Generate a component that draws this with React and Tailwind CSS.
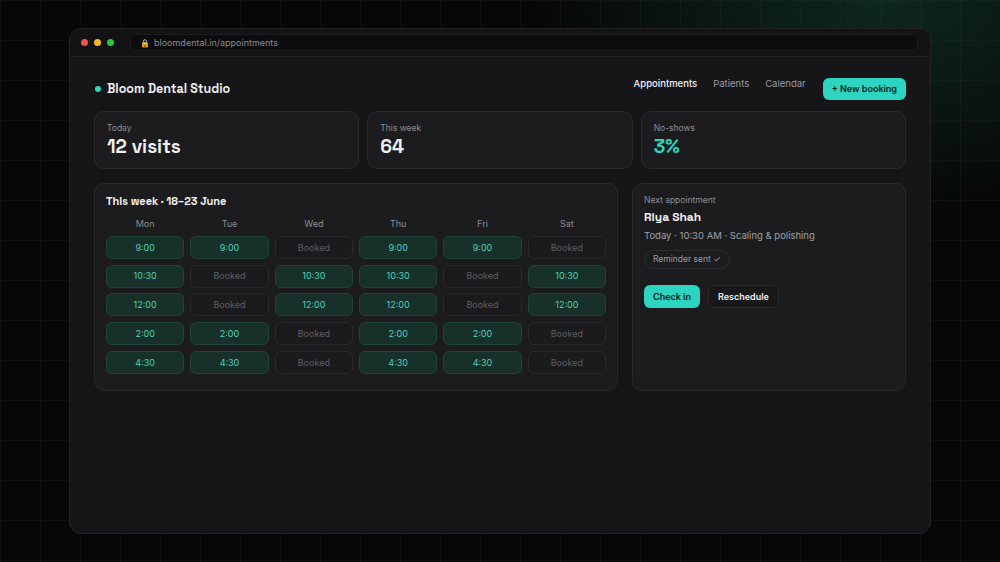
const days = ['Mon', 'Tue', 'Wed', 'Thu', 'Fri', 'Sat'];

// null = booked
const schedule = [
    ['9:00', '9:00', null, '9:00', '9:00', null],
    ['10:30', null, '10:30', '10:30', null, '10:30'],
    ['12:00', null, '12:00', '12:00', null, '12:00'],
    ['2:00', '2:00', null, '2:00', '2:00', null],
    ['4:30', '4:30', null, '4:30', '4:30', null],
];

const stats = [
    { label: 'Today', value: '12 visits', accent: false },
    { label: 'This week', value: '64', accent: false },
    { label: 'No-shows', value: '3%', accent: true },
];

const heading = { fontFamily: '"Space Grotesk", Inter, "Liberation Sans", sans-serif' };

const Slot = ({ time }) =>
    time ? (
        <div className="h-[23px] rounded-[6px] bg-[#173029] border border-[#1f4239] flex items-center justify-center text-[9px] text-[#4fd1b8]">
            {time}
        </div>
    ) : (
        <div className="h-[23px] rounded-[6px] bg-[#1b1b1e] border border-[#2a2a2e] flex items-center justify-center text-[9px] text-[#5d5d63]">
            Booked
        </div>
    );

export default function App() {
    return (
        <div
            className="w-[1000px] h-[562px] overflow-hidden bg-[#070708] relative pt-[28px] px-[69px]"
            style={{ fontFamily: 'Inter, "Liberation Sans", sans-serif' }}
        >
            {/* backdrop grid + glow */}
            <div
                className="absolute inset-0"
                style={{
                    backgroundImage:
                        'radial-gradient(ellipse 460px 280px at 880px 0px, rgba(20,70,58,0.5), transparent 75%), linear-gradient(to right, rgba(255,255,255,0.035) 1px, transparent 1px), linear-gradient(to bottom, rgba(255,255,255,0.035) 1px, transparent 1px)',
                    backgroundSize: '100% 100%, 40px 40px, 40px 40px',
                }}
            />

            <div className="relative h-[506px] rounded-[12px] bg-[#161618] border border-[#232326] overflow-hidden">
                {/* title bar */}
                <div className="h-[28px] flex items-center pl-[11px] pr-[12px] border-b border-[#1f1f22] bg-[#131315]">
                    <div className="flex gap-[6px]">
                        <span className="w-[7px] h-[7px] rounded-full bg-[#ef5350]" />
                        <span className="w-[7px] h-[7px] rounded-full bg-[#f5b82e]" />
                        <span className="w-[7px] h-[7px] rounded-full bg-[#27c93f]" />
                    </div>
                    <div className="ml-[16px] flex-1 h-[17px] rounded-[6px] bg-[#0b0b0d] border border-[#1d1d20] flex items-center pl-[9px] gap-[4px]">
                        <span className="text-[8px] leading-none">🔒</span>
                        <span className="text-[9px] text-[#8a8a90]">bloomdental.in/appointments</span>
                    </div>
                </div>

                <div className="px-[24px] pt-[21px]">
                    {/* header */}
                    <div className="flex items-center justify-between h-[22px]">
                        <div className="flex items-center gap-[6px] pl-[1px]">
                            <span className="w-[6px] h-[6px] rounded-full bg-[#2dd4bf]" />
                            <span className="text-[12.5px] font-semibold text-[#ececee]" style={heading}>
                                Bloom Dental Studio
                            </span>
                        </div>
                        <div className="flex items-center">
                            <nav className="flex items-center gap-[16px] text-[9.5px] -mt-[9px]">
                                <span className="text-[#f2f2f4] font-medium">Appointments</span>
                                <span className="text-[#9a9aa0]">Patients</span>
                                <span className="text-[#9a9aa0]">Calendar</span>
                            </nav>
                            <button className="ml-[17px] h-[22px] px-[9px] rounded-[6px] bg-[#2dd4bf] text-[#06201b] text-[9px] font-semibold">
                                + New booking
                            </button>
                        </div>
                    </div>

                    {/* stats */}
                    <div className="grid grid-cols-3 gap-[8px] mt-[11px]">
                        {stats.map((s) => (
                            <div key={s.label} className="h-[58px] rounded-[10px] bg-[#1c1c1f] border border-[#29292d] px-[12px] pt-[12px]">
                                <div className="text-[8.5px] text-[#8d8d93] leading-none">{s.label}</div>
                                <div
                                    className={`text-[19px] font-semibold leading-none mt-[4px] ${s.accent ? 'text-[#2dd4bf]' : 'text-[#f0f0f2]'}`}
                                    style={heading}
                                >
                                    {s.value}
                                </div>
                            </div>
                        ))}
                    </div>

                    {/* lower */}
                    <div className="grid grid-cols-[524px_1fr] gap-[14px] mt-[14px]">
                        <div className="rounded-[10px] bg-[#1c1c1f] border border-[#29292d] px-[11px] pt-[12px] pb-[16px]">
                            <div className="text-[11px] font-semibold text-[#f0f0f2] leading-none" style={heading}>
                                This week · 18–23 June
                            </div>
                            <div className="grid grid-cols-6 gap-x-[6px] mt-[12px]">
                                {days.map((d) => (
                                    <div key={d} className="text-center text-[9px] text-[#8d8d93] leading-none">
                                        {d}
                                    </div>
                                ))}
                            </div>
                            <div className="grid grid-cols-6 gap-x-[6px] gap-y-[5.7px] mt-[8px]">
                                {schedule.flatMap((row, r) =>
                                    row.map((t, c) => <Slot key={`${r}-${c}`} time={t} />)
                                )}
                            </div>
                        </div>

                        <div className="rounded-[10px] bg-[#1c1c1f] border border-[#29292d] px-[11px] pt-[12px]">
                            <div className="text-[8.5px] text-[#8d8d93] leading-none">Next appointment</div>
                            <div className="text-[12px] font-semibold text-[#f0f0f2] leading-none mt-[6px]" style={heading}>
                                Riya Shah
                            </div>
                            <div className="text-[9.5px] text-[#a0a0a6] leading-none mt-[8px]">
                                Today · 10:30 AM · Scaling &amp; polishing
                            </div>
                            <div className="inline-flex mt-[10px] h-[19px] items-center px-[8px] rounded-full border border-[#2c2c30] text-[8.5px] text-[#9a9aa0]">
                                Reminder sent ✓
                            </div>
                            <div className="flex gap-[8px] mt-[16px]">
                                <button className="h-[23px] px-[9px] rounded-[6px] bg-[#2dd4bf] text-[#06201b] text-[9px] font-semibold">
                                    Check in
                                </button>
                                <button className="h-[23px] px-[9px] rounded-[6px] bg-[#18181b] border border-[#2a2a2e] text-[#ececee] text-[9px] font-semibold">
                                    Reschedule
                                </button>
                            </div>
                        </div>
                    </div>
                </div>
            </div>
        </div>
    );
}
